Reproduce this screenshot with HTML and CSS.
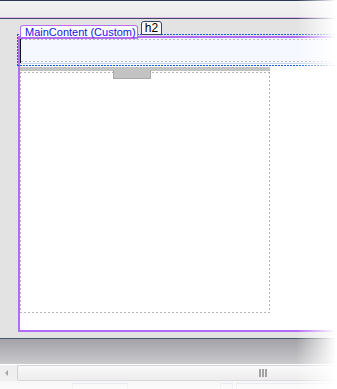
FILE: index.html
```html
<!DOCTYPE html>
<html lang="en">
<head>
    <meta charset="UTF-8">
    <meta name="viewport" content="width=device-width, initial-scale=1.0">
    <title>Design View</title>
    <link rel="stylesheet" href="styles.css">
</head>
<body>
    <div class="toolbar"></div>

    <div class="canvas">
        <div class="region">
            <div class="heading"><div class="heading-inner"></div></div>
            <div class="heading-rule"></div>
            <div class="panel">
                <div class="panel-grip"></div>
                <div class="panel-body"></div>
            </div>
        </div>
        <div class="select-outline"></div>
        <div class="region-tag">MainContent (Custom)</div>
        <div class="element-tag">h2</div>
    </div>

    <div class="splitter"></div>

    <div class="scrollbar">
        <span class="scroll-arrow"></span>
        <div class="scroll-thumb"><span class="grip"></span></div>
    </div>

    <div class="statusbar">
        <span class="status-box wide"></span>
        <span class="status-box small"></span>
        <span class="status-box rest"></span>
    </div>

    <div class="fade"></div>
</body>
</html>
```

FILE: styles.css
```css
html, body {
    margin: 0;
    padding: 0;
}
body {
    width: 337px;
    height: 389px;
    overflow: hidden;
    background-color: #e3e3e3;
    font-family: "Liberation Sans", Arial, sans-serif;
}

/* top strip */
.toolbar {
    height: 17px;
    border-top: 1px solid #2b3852;
    border-bottom: 1px solid #3c4a62;
    background: linear-gradient(#f2f2f2, #ececec);
    box-shadow: inset 0 -1px #e2bdec;
}

/* design surface */
.canvas {
    position: relative;
    box-sizing: border-box;
    height: 319px;
    padding: 17px 0 0 18px;
    background-color: #e3e3e3;
}
.region {
    height: 292px;
    border: 2px solid #b36cf5;
    border-right: none;
    background-color: #fff;
}
.heading {
    box-sizing: border-box;
    height: 25px;
    padding-top: 1px;
    border-left: 1px solid #111;
    background-color: #f5f8ff;
}
.heading-inner {
    height: 23px;
    background:
        repeating-linear-gradient(90deg, #b9b9b9 0 2px, transparent 2px 4px) top / 100% 1px no-repeat,
        repeating-linear-gradient(90deg, #b9b9b9 0 2px, transparent 2px 4px) bottom / 100% 1px no-repeat;
}
.heading-rule {
    height: 1px;
    background-color: #c9d5ee;
}
.panel {
    position: relative;
    width: 250px;
    margin-top: 3px;
    border-top: 4px solid #c3c3c3;
}
.panel-grip {
    position: absolute;
    left: 93px;
    top: -1px;
    width: 36px;
    height: 8px;
    background-color: #c3c3c3;
    border: 1px solid #a9a9a9;
    border-top: none;
}
.panel-body {
    height: 241px;
    margin-top: 1px;
    background:
        repeating-linear-gradient(90deg, #b4b4b4 0 2px, transparent 2px 4px) top / 100% 1px no-repeat,
        repeating-linear-gradient(90deg, #b4b4b4 0 2px, transparent 2px 4px) bottom / 100% 1px no-repeat,
        repeating-linear-gradient(180deg, #b4b4b4 0 2px, transparent 2px 4px) left / 1px 100% no-repeat,
        repeating-linear-gradient(180deg, #b4b4b4 0 2px, transparent 2px 4px) right / 1px 100% no-repeat;
}

/* selection outline around the h2 */
.select-outline {
    position: absolute;
    left: 17px;
    right: 0;
    top: 15px;
    height: 32px;
    background:
        repeating-linear-gradient(90deg, #1b62d9 0 2px, transparent 2px 3px) top / 100% 1px no-repeat,
        repeating-linear-gradient(90deg, #1b62d9 0 2px, transparent 2px 3px) bottom / 100% 1px no-repeat,
        repeating-linear-gradient(180deg, #1b62d9 0 2px, transparent 2px 3px) left / 1px 100% no-repeat;
}
.region-tag {
    position: absolute;
    left: 20px;
    top: 6px;
    box-sizing: border-box;
    width: 118px;
    height: 14px;
    padding-left: 4px;
    border: 1px solid #b36cf5;
    border-bottom-width: 2px;
    border-radius: 3px 3px 0 0;
    background-color: #fff;
    color: #1414e6;
    font-size: 11px;
    line-height: 12px;
    white-space: nowrap;
}
.element-tag {
    position: absolute;
    left: 141px;
    top: 2px;
    box-sizing: border-box;
    width: 21px;
    height: 14px;
    border: 1px solid #3b4560;
    border-radius: 3px 3px 0 0;
    background: linear-gradient(#fffef6, #f4f6fb);
    color: #000;
    font-size: 12px;
    line-height: 12px;
    text-align: center;
}

/* lower panes */
.splitter {
    height: 25px;
    border-top: 1px solid #4b5a6b;
    border-bottom: 1px solid #fff;
    background: linear-gradient(#a2a2a7, #cacacd);
}
.scrollbar {
    display: flex;
    align-items: center;
    height: 16px;
    background-color: #efefef;
}
.scroll-arrow {
    width: 0;
    height: 0;
    margin: 0 9px 0 5px;
    border-top: 3px solid transparent;
    border-bottom: 3px solid transparent;
    border-right: 3px solid #a4a4a4;
}
.scroll-thumb {
    display: flex;
    align-items: center;
    flex: 1;
    box-sizing: border-box;
    height: 16px;
    padding-left: 241px;
    border: 1px solid #d3d3d3;
    border-right: none;
    border-radius: 2px 0 0 2px;
    background: linear-gradient(#f9f9f9, #ececec);
}
.grip {
    width: 8px;
    height: 8px;
    background: repeating-linear-gradient(90deg, #a3a3a3 0 2px, transparent 2px 3px);
}
.statusbar {
    display: flex;
    gap: 3px;
    height: 8px;
    padding: 2px 0 0 72px;
    background-color: #f6f6f6;
}
.status-box {
    border: 1px solid #dfe5ee;
    border-bottom: none;
}
.status-box.wide {
    width: 54px;
    margin-right: 89px;
}
.status-box.small {
    width: 11px;
}
.status-box.rest {
    flex: 1;
}

/* soft fade at the edges of the capture */
.fade {
    position: fixed;
    inset: 0;
    pointer-events: none;
    background:
        linear-gradient(to right, rgba(255, 255, 255, 0) 296px, #fff 336px),
        linear-gradient(to bottom, rgba(255, 255, 255, 0) 378px, rgba(255, 255, 255, 0.6) 389px);
}
```
